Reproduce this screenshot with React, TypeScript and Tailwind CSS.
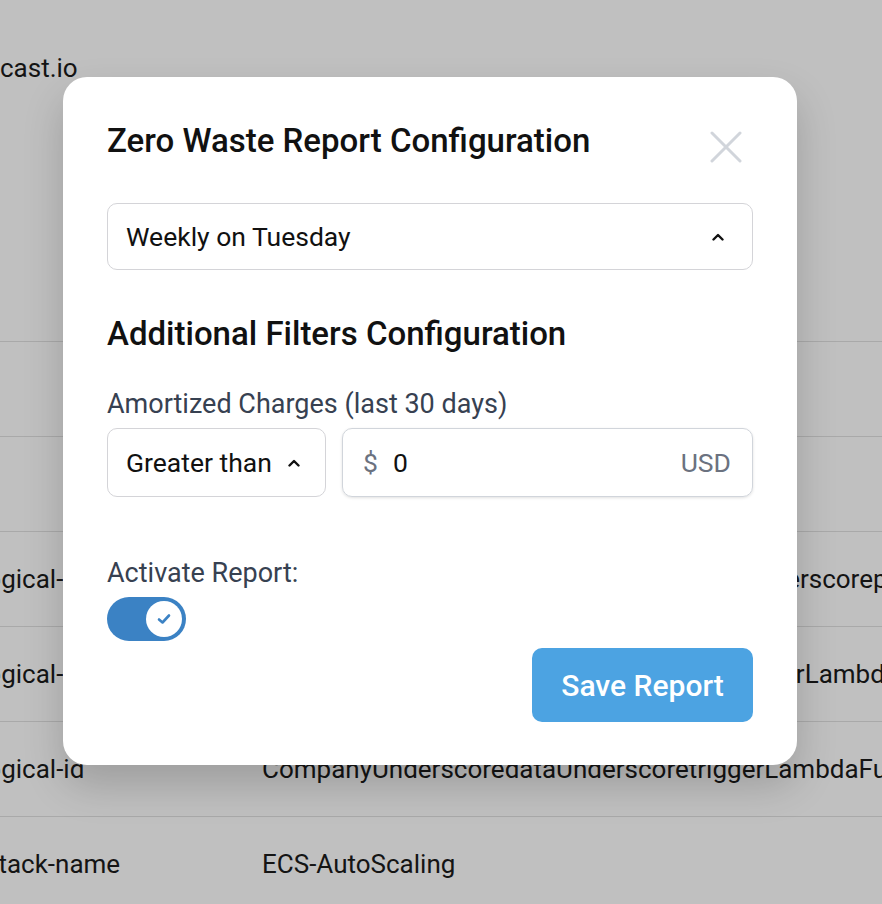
import React from "react";

const font = { fontFamily: "Roboto, 'Noto Sans', 'Liberation Sans', sans-serif" };

function Chevron() {
  return (
    <svg width="12" height="8" viewBox="0 0 12 8" fill="none">
      <polyline points="1.5,6.5 6,2 10.5,6.5" stroke="#111" strokeWidth="2.4" strokeLinecap="round" strokeLinejoin="round" />
    </svg>
  );
}

function BgRow({ left, leftShift, right }: { left: string; leftShift: string; right: string }) {
  return (
    <div className="h-[95px] border-t border-[#a9a9a9] flex items-center whitespace-nowrap overflow-hidden">
      <div className="w-[262px] shrink-0 overflow-hidden">
        <span className={leftShift}>{left}</span>
      </div>
      <div className="shrink-0">{right}</div>
    </div>
  );
}

export default function App() {
  return (
    <div className="relative w-[882px] h-[904px] overflow-hidden bg-[#c0c0c0] text-[#141414] text-[26px]" style={font}>
      {/* background table */}
      <div className="h-[341px] pt-[53px] leading-[30px] whitespace-nowrap">
        <span>cast.io</span>
      </div>
      <div className="leading-[30px]">
        <BgRow left="" leftShift="" right="" />
        <BgRow left="" leftShift="" right="" />
        <BgRow left="logical-id" leftShift="-ml-[20px] inline-block" right="CompanyUnderscoredataUnderscoredataUnderscoreprocessor" />
        <BgRow left="logical-id" leftShift="-ml-[20px] inline-block" right="CompanyUnderscoredataUnderscoreprocessorLambdaFunction" />
        <BgRow left="logical-id" leftShift="-ml-[20px] inline-block" right="CompanyUnderscoredataUnderscoretriggerLambdaFunction" />
        <BgRow left="stack-name" leftShift="-ml-[15px] inline-block" right="ECS-AutoScaling" />
      </div>

      {/* modal */}
      <div className="absolute left-[63px] top-[77px] w-[734px] bg-white rounded-[24px] shadow-[0_20px_40px_rgba(0,0,0,0.18)] px-[44px] pt-[44px] pb-[43px] text-[#111]">
        <div className="h-[40px] flex items-start justify-between">
          <h2 className="text-[33px] leading-[40px] font-medium">Zero Waste Report Configuration</h2>
          <svg className="mt-[10px] mr-[11px] shrink-0" width="32" height="32" viewBox="0 0 32 32" fill="none">
            <line x1="2" y1="2" x2="30" y2="30" stroke="#d1d5db" strokeWidth="3" strokeLinecap="round" />
            <line x1="30" y1="2" x2="2" y2="30" stroke="#d1d5db" strokeWidth="3" strokeLinecap="round" />
          </svg>
        </div>

        <div className="mt-[42px] h-[67px] border border-[#d4d4d8] rounded-[10px] flex items-center justify-between pl-[18px] pr-[28px]">
          <span className="text-[26.5px]">Weekly on Tuesday</span>
          <Chevron />
        </div>

        <h3 className="mt-[44px] text-[33px] leading-[40px] font-medium">Additional Filters Configuration</h3>

        <div className="mt-[35px] text-[27px] leading-[30px] text-[#374151]">Amortized Charges (last 30 days)</div>

        <div className="mt-[9px] flex gap-[16px]">
          <div className="w-[219px] h-[69px] border border-[#d4d4d8] rounded-[10px] flex items-center pl-[18px] gap-[16px]">
            <span className="text-[26.5px]">Greater than</span>
            <Chevron />
          </div>
          <div className="flex-1 h-[69px] border border-[#d1d5db] rounded-[10px] shadow-[0_1px_3px_rgba(0,0,0,0.12)] flex items-center pl-[20px] pr-[21px]">
            <span className="text-[26.5px] text-[#6b7280]">$</span>
            <span className="ml-[15px] text-[26.5px]">0</span>
            <span className="ml-auto text-[26.5px] text-[#6b7280]">USD</span>
          </div>
        </div>

        <div className="mt-[61px] text-[27px] leading-[30px] text-[#374151]">Activate Report:</div>

        <div className="mt-[9px] w-[79px] h-[44px] rounded-full bg-[#3b82c4] flex items-center justify-end pr-[4px]">
          <div className="w-[36px] h-[36px] rounded-full bg-white flex items-center justify-center">
            <svg width="14" height="12" viewBox="0 0 14 12" fill="none">
              <polyline points="2,6.5 5.5,9.5 12,2.5" stroke="#3b82c4" strokeWidth="2.6" strokeLinecap="round" strokeLinejoin="round" />
            </svg>
          </div>
        </div>

        <div className="mt-[7px] flex justify-end">
          <button className="w-[221px] h-[74px] rounded-[10px] bg-[#4ca3e2] text-white text-[30px] font-medium">Save Report</button>
        </div>
      </div>
    </div>
  );
}
